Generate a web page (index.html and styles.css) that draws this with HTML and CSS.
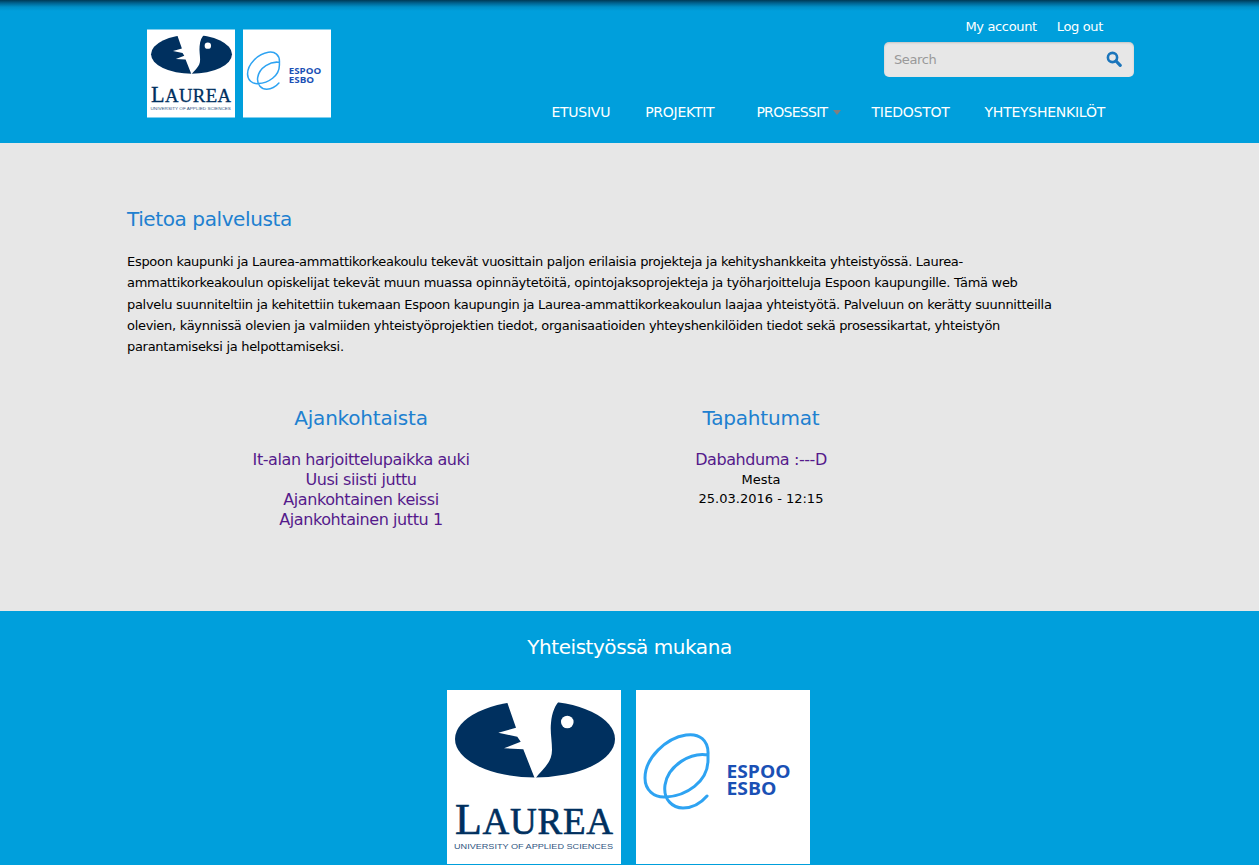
FILE: index.html
```html
<!DOCTYPE html>
<html lang="en">
<head>
    <meta charset="UTF-8">
    <meta name="viewport" content="width=device-width, initial-scale=1.0">
    <title>Tietoa palvelusta</title>
    <link rel="stylesheet" href="styles.css">
</head>
<body>
    <header class="site-header">
        <div class="header-logos">
            <svg class="logo-small-box" viewBox="0 0 174 174">
                <g id="logoLaurea">
                    <rect width="174" height="174" fill="#fff"/>
                    <ellipse cx="88" cy="49" rx="80" ry="38.5" fill="#00305f"/>
                    <path d="M58 6 L69 37.7 L51.3 42.7 L70.3 46.7 L73.7 51.7 L57 58.3 L76.3 59.3 L88 89 C94 80 105 74 105 60 C105 50 103 42 104 33 C105 22 108 15 114 9 Z" fill="#fff"/>
                    <circle cx="120.3" cy="32" r="6.3" fill="#fff"/>
                    <text class="logo-serif" x="8" y="144" textLength="158" lengthAdjust="spacing"><tspan font-size="44">L</tspan><tspan font-size="37">AUREA</tspan></text>
                    <text class="logo-small" x="7" y="158.5" textLength="159" lengthAdjust="spacingAndGlyphs">UNIVERSITY OF APPLIED SCIENCES</text>
                </g>
            </svg>
            <svg class="logo-small-box" viewBox="0 0 174 174">
                <g id="logoEspoo">
                    <rect width="174" height="174" fill="#fff"/>
                    <path d="M72 65 C73 50 63 43 50 45 C30 48 9 68 9 88 C9 100 18 108 30 107 C50 106 72 92 72 70 C72 67 72 66 72 65 C55 62 32 75 29 95 C27 110 37 118 47 118 C56 118 65 113 71 106" fill="none" stroke="#2ea3f2" stroke-width="3" stroke-linecap="round"/>
                    <text class="logo-espoo" x="90.5" y="87.5" textLength="64" lengthAdjust="spacingAndGlyphs">ESPOO</text>
                    <text class="logo-espoo" x="90.5" y="105" textLength="50" lengthAdjust="spacingAndGlyphs">ESBO</text>
                </g>
            </svg>
        </div>
        <div class="header-right">
            <div class="user-links">
                <a href="#">My account</a>
                <a href="#">Log out</a>
            </div>
            <form class="search-box">
                <input type="text" placeholder="Search">
                <svg class="search-icon" viewBox="0 0 16 16" width="16" height="16">
                    <circle cx="6.5" cy="6.5" r="4.6" fill="none" stroke="#1b75bb" stroke-width="2.6"/>
                    <path d="M10 10 L14.2 14.4" stroke="#1b75bb" stroke-width="3.2" stroke-linecap="round"/>
                </svg>
            </form>
            <nav class="main-nav">
                <a href="#">ETUSIVU</a>
                <a href="#">PROJEKTIT</a>
                <a href="#" class="dropdown">PROSESSIT<span class="caret"></span></a>
                <a href="#">TIEDOSTOT</a>
                <a href="#">YHTEYSHENKILÖT</a>
            </nav>
        </div>
    </header>

    <main class="content">
        <h2 class="page-title">Tietoa palvelusta</h2>
        <p class="intro">Espoon kaupunki ja Laurea-ammattikorkeakoulu tekevät vuosittain paljon erilaisia projekteja ja kehityshankkeita yhteistyössä. Laurea-ammattikorkeakoulun opiskelijat tekevät muun muassa opinnäytetöitä, opintojaksoprojekteja ja työharjoitteluja Espoon kaupungille. Tämä web palvelu suunniteltiin ja kehitettiin tukemaan Espoon kaupungin ja Laurea-ammattikorkeakoulun laajaa yhteistyötä. Palveluun on kerätty suunnitteilla olevien, käynnissä olevien ja valmiiden yhteistyöprojektien tiedot, organisaatioiden yhteyshenkilöiden tiedot sekä prosessikartat, yhteistyön parantamiseksi ja helpottamiseksi.</p>

        <div class="columns">
            <section class="column">
                <h3>Ajankohtaista</h3>
                <a href="#">It-alan harjoittelupaikka auki</a>
                <a href="#">Uusi siisti juttu</a>
                <a href="#">Ajankohtainen keissi</a>
                <a href="#">Ajankohtainen juttu 1</a>
            </section>
            <section class="column">
                <h3>Tapahtumat</h3>
                <a href="#">Dabahduma :---D</a>
                <div class="event-info">Mesta</div>
                <div class="event-info">25.03.2016 - 12:15</div>
            </section>
        </div>
    </main>

    <footer class="site-footer">
        <h3>Yhteistyössä mukana</h3>
        <div class="partner-logos">
            <svg class="logo-big-box" viewBox="0 0 174 174"><use href="#logoLaurea"/></svg>
            <svg class="logo-big-box" viewBox="0 0 174 174"><use href="#logoEspoo"/></svg>
        </div>
    </footer>
</body>
</html>
```

FILE: styles.css
```css
* {
    box-sizing: border-box;
}

html, body {
    height: 865px;
    overflow: hidden;
}

body {
    margin: 0;
    font-family: "DejaVu Sans", sans-serif;
    font-size: 13px;
    color: #000;
    background-color: #e7e7e7;
}

a {
    text-decoration: none;
}

.logo-serif {
    font-family: "Liberation Serif", serif;
    fill: #00305f;
    stroke: #00305f;
    stroke-width: 0.6px;
}

.logo-small {
    font-family: "Liberation Sans", sans-serif;
    font-size: 8px;
    fill: #2f5580;
}

.logo-espoo {
    font-family: "Open Sans", sans-serif;
    font-weight: 700;
    font-size: 17px;
    fill: #1a50b5;
}

.site-header {
    height: 143px;
    display: flex;
    justify-content: space-between;
    padding: 0 125px 0 147px;
    background: linear-gradient(to bottom, #003a55 0, #00628f 3px, #0090c8 7px, #009fdc 11px);
}

.header-logos {
    display: flex;
    gap: 8px;
    padding-top: 29px;
}

.logo-small-box {
    width: 88px;
    height: 89px;
}

.header-right {
    width: 500px;
    display: flex;
    flex-direction: column;
    align-items: flex-end;
}

.user-links {
    display: flex;
    gap: 20px;
    padding: 19px 31px 0 0;
    height: 42px;
}

.user-links a {
    color: #fff;
    font-size: 13px;
    line-height: 16px;
    letter-spacing: -0.35px;
}

.search-box {
    position: relative;
    width: 250px;
    height: 35px;
    margin: 0;
}

.search-box input {
    width: 100%;
    height: 100%;
    padding: 0 40px 0 10px;
    border: none;
    border-radius: 5px;
    background-color: #e7e7e7;
    box-shadow: inset 0 1px 2px rgba(0, 0, 0, 0.15);
    font-family: "DejaVu Sans", sans-serif;
    font-size: 13px;
    letter-spacing: -0.4px;
}

.search-box input::placeholder {
    color: #999;
}

.search-icon {
    position: absolute;
    top: 9px;
    right: 12px;
}

.main-nav {
    display: flex;
    gap: 35px;
    padding: 26px 29px 0 0;
}

.main-nav a {
    color: #fff;
    font-size: 14px;
    line-height: 18px;
    letter-spacing: -0.25px;
    white-space: nowrap;
}

.main-nav .dropdown {
    display: flex;
    align-items: center;
    margin-left: 7px;
    margin-right: -5px;
    letter-spacing: -0.7px;
}

.caret {
    margin-left: 6px;
    border-top: 5px solid #7f7f7f;
    border-left: 4.5px solid transparent;
    border-right: 4.5px solid transparent;
}

.content {
    height: 468px;
    padding: 63px 0 0 127px;
}

.page-title {
    margin: 0 0 19px;
    font-size: 20px;
    font-weight: normal;
    line-height: 26px;
    color: #2080d0;
    letter-spacing: -0.4px;
}

.intro {
    width: 935px;
    margin: 0;
    line-height: 21.25px;
    letter-spacing: -0.3px;
}

.columns {
    display: flex;
    margin: 48px 0 0 34px;
}

.column {
    width: 400px;
    display: flex;
    flex-direction: column;
    text-align: center;
}

.column h3 {
    margin: 0 0 19px;
    font-size: 20px;
    font-weight: normal;
    line-height: 26px;
    color: #2080d0;
    letter-spacing: -0.2px;
}

.column a {
    font-size: 16px;
    line-height: 20px;
    color: #551a8b;
    letter-spacing: -0.42px;
}

.event-info {
    line-height: 19px;
}

.site-footer {
    height: 254px;
    padding-top: 23px;
    background-color: #009fdc;
    text-align: center;
}

.site-footer h3 {
    margin: 0 0 30px;
    font-size: 20px;
    font-weight: normal;
    line-height: 26px;
    color: #fff;
    letter-spacing: -0.45px;
}

.partner-logos {
    display: flex;
    justify-content: center;
    gap: 15px;
    padding-right: 2px;
}

.logo-big-box {
    width: 174px;
    height: 174px;
}
```
